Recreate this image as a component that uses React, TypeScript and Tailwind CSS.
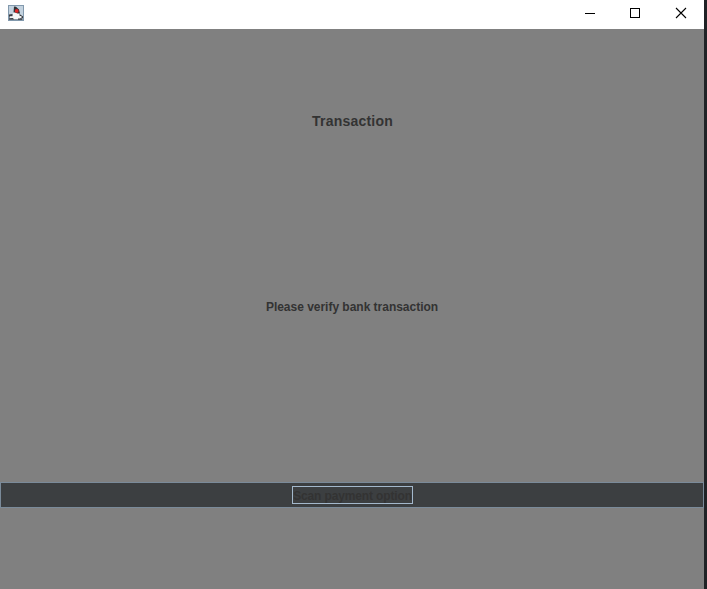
function DukeIcon() {
  return (
    <svg width="16" height="16" viewBox="0 0 16 16" className="mb-[3px]">
      <rect width="16" height="16" fill="#8299ad" />
      <rect x="1" y="1" width="14" height="14" fill="#c3d2df" />
      <path d="M1 11h14v4H1z" fill="#8794a0" />
      <path d="M6 6L4.500 10 4 14h8l-.5-4L10.500 7z" fill="#f6f6f6" />
      <path d="M6 1.500l2 .3L11 4.500 12 8.500 9.500 8.500 7 7.500 5.500 7.500z" fill="#303236" />
      <path d="M1 9.500L4.500 9v2.500H1zM11.500 9L15 11.500V13h-3zM1 13.500l4-.5 1 1.500H1zM10 13.500h4v1.300h-4z" fill="#383b40" />
      <path d="M2 11.200h3.500v1.800H2zM11 11h2.500v2H11z" fill="#f0f0f0" />
      <circle cx="8.700" cy="5.900" r="1.900" fill="#e22626" />
    </svg>
  );
}

export default function App() {
  return (
    <div className="flex h-[589px] w-[707px] bg-[#202326] font-['Liberation_Sans',Arial,sans-serif]">
      <main className="flex w-[704px] flex-col bg-[#808080] text-[#333333]">
        <header className="flex h-[29px] items-center justify-between bg-white pl-2">
          <DukeIcon />
          <svg width="138" height="29" viewBox="566 0 138 29" fill="none" stroke="#000" shapeRendering="crispEdges">
            <path d="M585 13.5h10M630.5 8.500h9v9h-9z" />
            <path d="M676 8l10 10M686 8l-10 10" strokeWidth="1.100" shapeRendering="auto" />
          </svg>
        </header>
        <h1 className="pt-[83px] pl-px text-center text-[14px] leading-[18px] font-bold tracking-[0.22px]">Transaction</h1>
        <p className="pt-[168px] text-center text-[12px] leading-[18px] font-bold tracking-[-0.02px]">Please verify bank transaction</p>
        <button className="mt-[166px] flex h-[26px] items-center justify-center border border-[#7a8a99] bg-[#3c3f41] text-[12px] font-bold">
          <span className="flex h-[18px] w-[121px] items-center justify-center border border-[#a3b8cc] pt-[2px] pl-px leading-[16px] tracking-[-0.14px] whitespace-nowrap">Scan payment option</span>
        </button>
      </main>
    </div>
  );
}
